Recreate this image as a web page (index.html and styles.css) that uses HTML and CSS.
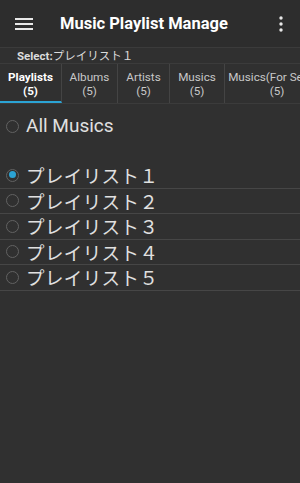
FILE: index.html
```html
<!DOCTYPE html>
<html lang="ja">
<head>
    <meta charset="UTF-8">
    <meta name="viewport" content="width=device-width, initial-scale=1.0">
    <title>Music Playlist Manage</title>
    <link rel="stylesheet" href="styles.css">
</head>
<body>
    <header class="app-bar">
        <svg class="menu-icon" width="18" height="14" viewBox="0 0 18 14">
            <rect x="0" y="1" width="18" height="2" fill="#e8e8e8"/>
            <rect x="0" y="6" width="18" height="2" fill="#e8e8e8"/>
            <rect x="0" y="11" width="18" height="2" fill="#e8e8e8"/>
        </svg>
        <h1 class="title">Music Playlist Manage</h1>
        <svg class="more-icon" width="4" height="16" viewBox="0 0 4 16">
            <circle cx="2" cy="2" r="1.7" fill="#e8e8e8"/>
            <circle cx="2" cy="8" r="1.7" fill="#e8e8e8"/>
            <circle cx="2" cy="14" r="1.7" fill="#e8e8e8"/>
        </svg>
    </header>

    <div class="select-bar"><b>Select:</b>プレイリスト１</div>

    <nav class="tabs">
        <div class="tab tab-playlists active">Playlists<br>(5)</div>
        <div class="tab tab-albums">Albums<br>(5)</div>
        <div class="tab tab-artists">Artists<br>(5)</div>
        <div class="tab tab-musics">Musics<br>(5)</div>
        <div class="tab tab-select">Musics(For Select)<br>(5)</div>
    </nav>

    <div class="all-row">
        <span class="radio"></span>
        <span class="label latin">All Musics</span>
    </div>

    <ul class="list">
        <li class="item"><span class="radio checked"></span><span class="label">プレイリスト１</span></li>
        <li class="item"><span class="radio"></span><span class="label">プレイリスト２</span></li>
        <li class="item"><span class="radio"></span><span class="label">プレイリスト３</span></li>
        <li class="item"><span class="radio"></span><span class="label">プレイリスト４</span></li>
        <li class="item"><span class="radio"></span><span class="label">プレイリスト５</span></li>
    </ul>
</body>
</html>
```

FILE: styles.css
```css
body {
    margin: 0;
    width: 300px;
    height: 483px;
    overflow: hidden;
    background-color: #303030;
    color: #e0e0e0;
    font-family: Roboto, "Noto Sans CJK JP", sans-serif;
}
.app-bar {
    display: flex;
    align-items: center;
    height: 47px;
    background: #2d2d2d;
    border-bottom: 1px solid #3b3b3b;
}
.menu-icon {
    margin-left: 15px;
    margin-top: 1px;
}
.title {
    margin: 0 0 0 27px;
    font-size: 16.5px;
    font-weight: bold;
    color: #ffffff;
    flex: 1;
    white-space: nowrap;
}
.more-icon {
    margin-right: 17px;
}
.select-bar {
    height: 15px;
    line-height: 16px;
    padding-left: 17px;
    font-size: 11.5px;
    color: #dcdcdc;
    border-bottom: 1px solid #3b3b3b;
}
.select-bar b {
    font-weight: bold;
}
.tabs {
    display: flex;
    height: 39px;
    border-bottom: 1px solid #3b3b3b;
    overflow: hidden;
    white-space: nowrap;
}
.tab {
    flex-shrink: 0;
    box-sizing: border-box;
    text-align: center;
    font-size: 11.7px;
    line-height: 13.5px;
    padding-top: 7px;
    color: #c8c8c8;
    border-right: 1px solid #444;
}
.tab-playlists { width: 62px; }
.tab-albums { width: 56px; }
.tab-artists { width: 52px; }
.tab-musics { width: 55px; }
.tab-select { width: 105px; }
.tab.active {
    color: #ffffff;
    font-weight: bold;
    border-bottom: 2px solid #2ba3d4;
}
.all-row {
    display: flex;
    align-items: center;
    height: 44px;
    padding-left: 6px;
}
.list {
    list-style: none;
    margin: 15px 0 0;
    padding: 0;
}
.item {
    display: flex;
    align-items: center;
    height: 24.5px;
    padding-left: 6px;
    border-bottom: 1px solid #464646;
}
.radio {
    box-sizing: border-box;
    width: 13px;
    height: 13px;
    border: 1.5px solid #626262;
    border-radius: 50%;
    margin-right: 7px;
    position: relative;
    flex-shrink: 0;
}
.radio.checked::after {
    content: "";
    position: absolute;
    left: 1.5px;
    top: 1.5px;
    width: 7px;
    height: 7px;
    border-radius: 50%;
    background: #2ba3d4;
}
.label {
    font-size: 18.5px;
    font-family: "Noto Sans CJK JP", sans-serif;
    color: #e0e0e0;
    line-height: 24px;
    letter-spacing: 0.4px;
}
.label.latin {
    font-family: Roboto, "Noto Sans CJK JP", sans-serif;
    font-size: 19px;
    letter-spacing: 0;
}
```
